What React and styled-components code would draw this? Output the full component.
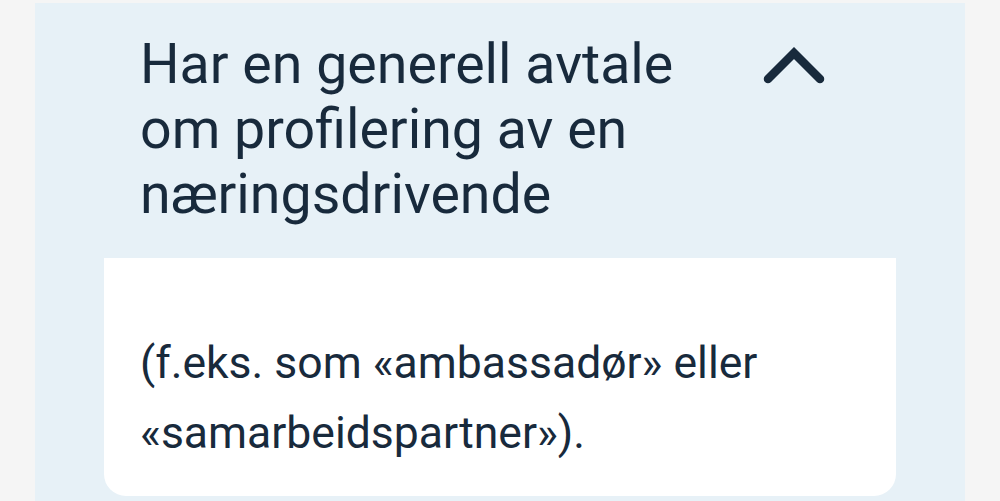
import React from "react";
import styled, { createGlobalStyle } from "styled-components";

const Global = createGlobalStyle`
  html, body { margin: 0; padding: 0; background: #f5f5f5; }
  body { font-family: Roboto, "Noto Sans", sans-serif; color: #182a3c; }
`;

const Page = styled.div`
  padding: 3px 35px 0;
  height: 498px;
  overflow: hidden;
`;

const Panel = styled.section`
  background: #e7f1f7;
  height: 100%;
  display: flex;
  flex-direction: column;
`;

const Header = styled.div`
  display: flex;
  align-items: flex-start;
  justify-content: space-between;
  padding: 29px 140px 0 105px;
  height: 255px;
  flex-shrink: 0;
  box-sizing: border-box;
`;

const Title = styled.h2`
  margin: 0;
  font-size: 55.5px;
  font-weight: 400;
  line-height: 65px;
  width: 580px;
  color: #182a3c;
`;

const Toggle = styled.button`
  border: 0;
  background: none;
  padding: 0;
  margin-top: 15px;
  width: 62px;
  height: 40px;
  display: flex;
  color: #182a3c;
  cursor: pointer;
`;

const Card = styled.div`
  margin: 0 69px;
  background: #fff;
  border-radius: 0 0 22px 22px;
  height: 238px;
  flex-shrink: 0;
  padding: 70px 36px 0;
  box-sizing: border-box;
`;

const Body = styled.p`
  margin: 0;
  font-size: 44.5px;
  line-height: 70px;
  color: #182a3c;
`;

function ChevronUp() {
  return (
    <svg width="62" height="40" viewBox="0 0 62 40" fill="none">
      <path
        d="M5 32 L31 6 L57 32"
        stroke="currentColor"
        strokeWidth="8.5"
        strokeLinecap="round"
        strokeLinejoin="miter"
      />
    </svg>
  );
}

export default function App() {
  return (
    <>
      <Global />
      <Page>
        <Panel>
          <Header>
            <Title>Har en generell avtale om profilering av en næringsdrivende</Title>
            <Toggle aria-label="Lukk">
              <ChevronUp />
            </Toggle>
          </Header>
          <Card>
            <Body>(f.eks. som «ambassadør» eller «samarbeidspartner»).</Body>
          </Card>
        </Panel>
      </Page>
    </>
  );
}
